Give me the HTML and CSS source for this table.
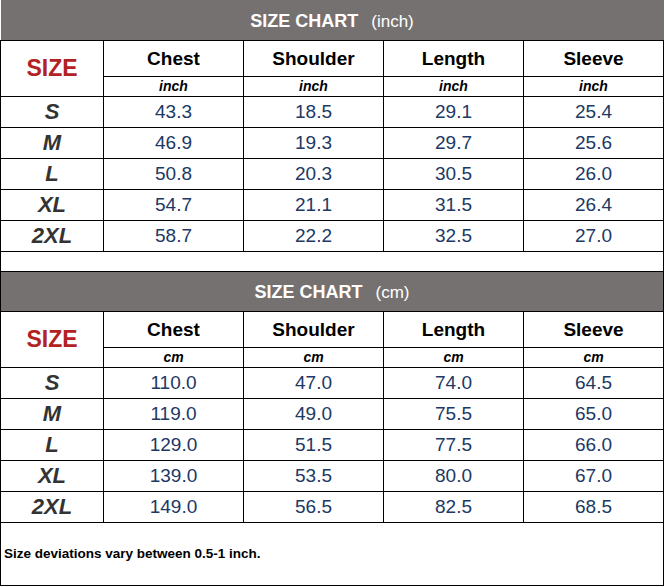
FILE: index.html
```html
<!DOCTYPE html>
<html>
<head>
<meta charset="utf-8">
<link rel="stylesheet" href="styles.css">
</head>
<body>
<table class="chart">
  <colgroup>
    <col class="c-size">
    <col class="c-val"><col class="c-val"><col class="c-val"><col class="c-val">
  </colgroup>
  <tbody>
    <tr class="r-title first"><td colspan="5" class="title"><b>SIZE CHART</b><span class="unit-t">(inch)</span></td></tr>
    <tr class="r-head">
      <td rowspan="2" class="size-h">SIZE</td>
      <td class="head">Chest</td><td class="head">Shoulder</td><td class="head">Length</td><td class="head">Sleeve</td>
    </tr>
    <tr class="r-unit"><td class="unit">inch</td><td class="unit">inch</td><td class="unit">inch</td><td class="unit">inch</td></tr>
    <tr class="r-data"><td class="sz">S</td><td class="num">43.3</td><td class="num">18.5</td><td class="num">29.1</td><td class="num">25.4</td></tr>
    <tr class="r-data"><td class="sz">M</td><td class="num">46.9</td><td class="num">19.3</td><td class="num">29.7</td><td class="num">25.6</td></tr>
    <tr class="r-data"><td class="sz">L</td><td class="num">50.8</td><td class="num">20.3</td><td class="num">30.5</td><td class="num">26.0</td></tr>
    <tr class="r-data"><td class="sz">XL</td><td class="num">54.7</td><td class="num">21.1</td><td class="num">31.5</td><td class="num">26.4</td></tr>
    <tr class="r-data"><td class="sz">2XL</td><td class="num">58.7</td><td class="num">22.2</td><td class="num">32.5</td><td class="num">27.0</td></tr>
    <tr class="r-gap"><td colspan="5"></td></tr>
    <tr class="r-title"><td colspan="5" class="title"><b>SIZE CHART</b><span class="unit-t">(cm)</span></td></tr>
    <tr class="r-head">
      <td rowspan="2" class="size-h">SIZE</td>
      <td class="head">Chest</td><td class="head">Shoulder</td><td class="head">Length</td><td class="head">Sleeve</td>
    </tr>
    <tr class="r-unit"><td class="unit">cm</td><td class="unit">cm</td><td class="unit">cm</td><td class="unit">cm</td></tr>
    <tr class="r-data"><td class="sz">S</td><td class="num">110.0</td><td class="num">47.0</td><td class="num">74.0</td><td class="num">64.5</td></tr>
    <tr class="r-data"><td class="sz">M</td><td class="num">119.0</td><td class="num">49.0</td><td class="num">75.5</td><td class="num">65.0</td></tr>
    <tr class="r-data"><td class="sz">L</td><td class="num">129.0</td><td class="num">51.5</td><td class="num">77.5</td><td class="num">66.0</td></tr>
    <tr class="r-data"><td class="sz">XL</td><td class="num">139.0</td><td class="num">53.5</td><td class="num">80.0</td><td class="num">67.0</td></tr>
    <tr class="r-data"><td class="sz">2XL</td><td class="num">149.0</td><td class="num">56.5</td><td class="num">82.5</td><td class="num">68.5</td></tr>
    <tr class="r-foot"><td colspan="5" class="foot">Size deviations vary between 0.5-1 inch.</td></tr>
  </tbody>
</table>
</body>
</html>
```

FILE: styles.css
```css
html, body {
  margin: 0;
  padding: 0;
  background: #ffffff;
}

.chart {
  border-collapse: collapse;
  table-layout: fixed;
  width: 663px;
  font-family: "Liberation Sans", Arial, sans-serif;
}

.c-size { width: 103px; }
.c-val { width: 140px; }

.chart td {
  border: 1px solid #000;
  padding: 0;
  text-align: center;
  vertical-align: middle;
  line-height: 1;
}

.r-title { height: 40px; }
.r-head { height: 36px; }
.r-unit { height: 20px; }
.r-data { height: 31px; }
.r-gap { height: 20px; }
.r-foot { height: 63px; }

.r-title.first td {
  border-top: none;
  border-left: none;
  border-right: none;
}

.chart td.title {
  background: #767171;
  color: #ffffff;
  font-size: 18px;
  padding-top: 2px;
}

.title b {
  font-weight: bold;
}

.unit-t {
  font-size: 17px;
  margin-left: 13px;
}

.size-h {
  color: #b22222;
  font-size: 23px;
  font-weight: bold;
}

.head {
  color: #000;
  font-size: 19px;
  font-weight: bold;
}

.unit {
  color: #000;
  font-size: 14px;
  font-weight: bold;
  font-style: italic;
}

.sz {
  color: #333;
  font-size: 22px;
  font-weight: bold;
  font-style: italic;
}

.num {
  color: #203864;
  font-size: 19px;
}

.chart td.foot {
  text-align: left;
  padding-left: 3px;
  font-size: 13.5px;
  font-weight: bold;
  color: #000;
}
```
